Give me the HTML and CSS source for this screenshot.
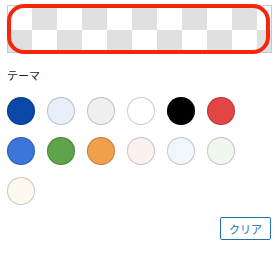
FILE: index.html
```html
<!DOCTYPE html>
<html lang="ja">
<head>
    <meta charset="UTF-8">
    <meta name="viewport" content="width=device-width, initial-scale=1.0">
    <title>カラーパレット</title>
    <link rel="stylesheet" href="styles.css">
</head>
<body>
    <div class="panel">
        <div class="preview">
            <div class="highlight"></div>
        </div>

        <div class="label">テーマ</div>
        <div class="swatches">
            <button class="swatch" style="background:#0b49a8" aria-label="Dark blue"></button>
            <button class="swatch" style="background:#e8eefa" aria-label="Light blue"></button>
            <button class="swatch" style="background:#efefef" aria-label="Light gray"></button>
            <button class="swatch" style="background:#ffffff" aria-label="White"></button>
            <button class="swatch" style="background:#000000" aria-label="Black"></button>
            <button class="swatch" style="background:#e34444" aria-label="Red"></button>
            <button class="swatch" style="background:#3b76d8" aria-label="Blue"></button>
            <button class="swatch" style="background:#5fa44a" aria-label="Green"></button>
            <button class="swatch" style="background:#f09f4b" aria-label="Orange"></button>
            <button class="swatch" style="background:#fdf1ef" aria-label="Pale pink"></button>
            <button class="swatch" style="background:#f1f6fc" aria-label="Pale blue"></button>
            <button class="swatch" style="background:#eff7ee" aria-label="Pale green"></button>
            <button class="swatch" style="background:#fdf9ef" aria-label="Cream"></button>
        </div>

        <div class="actions">
            <button class="clear">クリア</button>
        </div>
    </div>
</body>
</html>
```

FILE: styles.css
```css
body {
    margin: 0;
    background: #fff;
    font-family: "Noto Sans CJK JP", "Noto Sans", sans-serif;
    color: #1e1e1e;
}
.panel {
    padding: 5px 7px 0 7px;
}
.preview {
    position: relative;
    height: 48px;
    box-sizing: border-box;
    border: 1px solid #c8c8c8;
    background: conic-gradient(#e0e0e0 0 25%, #fff 0 50%, #e0e0e0 0 75%, #fff 0) 0 0 / 50px 50px;
    background-origin: border-box;
}
.highlight {
    position: absolute;
    top: -2px;
    left: -1px;
    right: 1px;
    bottom: -2px;
    border: 4px solid #f4260e;
    border-radius: 17px;
}
.label {
    margin-top: 14px;
    font-size: 11px;
    line-height: 16px;
}
.swatches {
    display: grid;
    grid-template-columns: repeat(6, 28px);
    gap: 12px;
    margin-top: 14px;
}
.swatch {
    width: 28px;
    height: 28px;
    padding: 0;
    border: none;
    border-radius: 50%;
    box-shadow: inset 0 0 0 1px rgba(0, 0, 0, 0.2);
}
.actions {
    display: flex;
    justify-content: flex-end;
    margin-top: 12px;
    padding-right: 1px;
}
.clear {
    height: 23px;
    padding: 0 8px;
    border: 1px solid #2271b1;
    border-radius: 2px;
    background: #fff;
    color: #2271b1;
    font-family: "Noto Sans CJK JP", sans-serif;
    font-size: 11px;
}
```
